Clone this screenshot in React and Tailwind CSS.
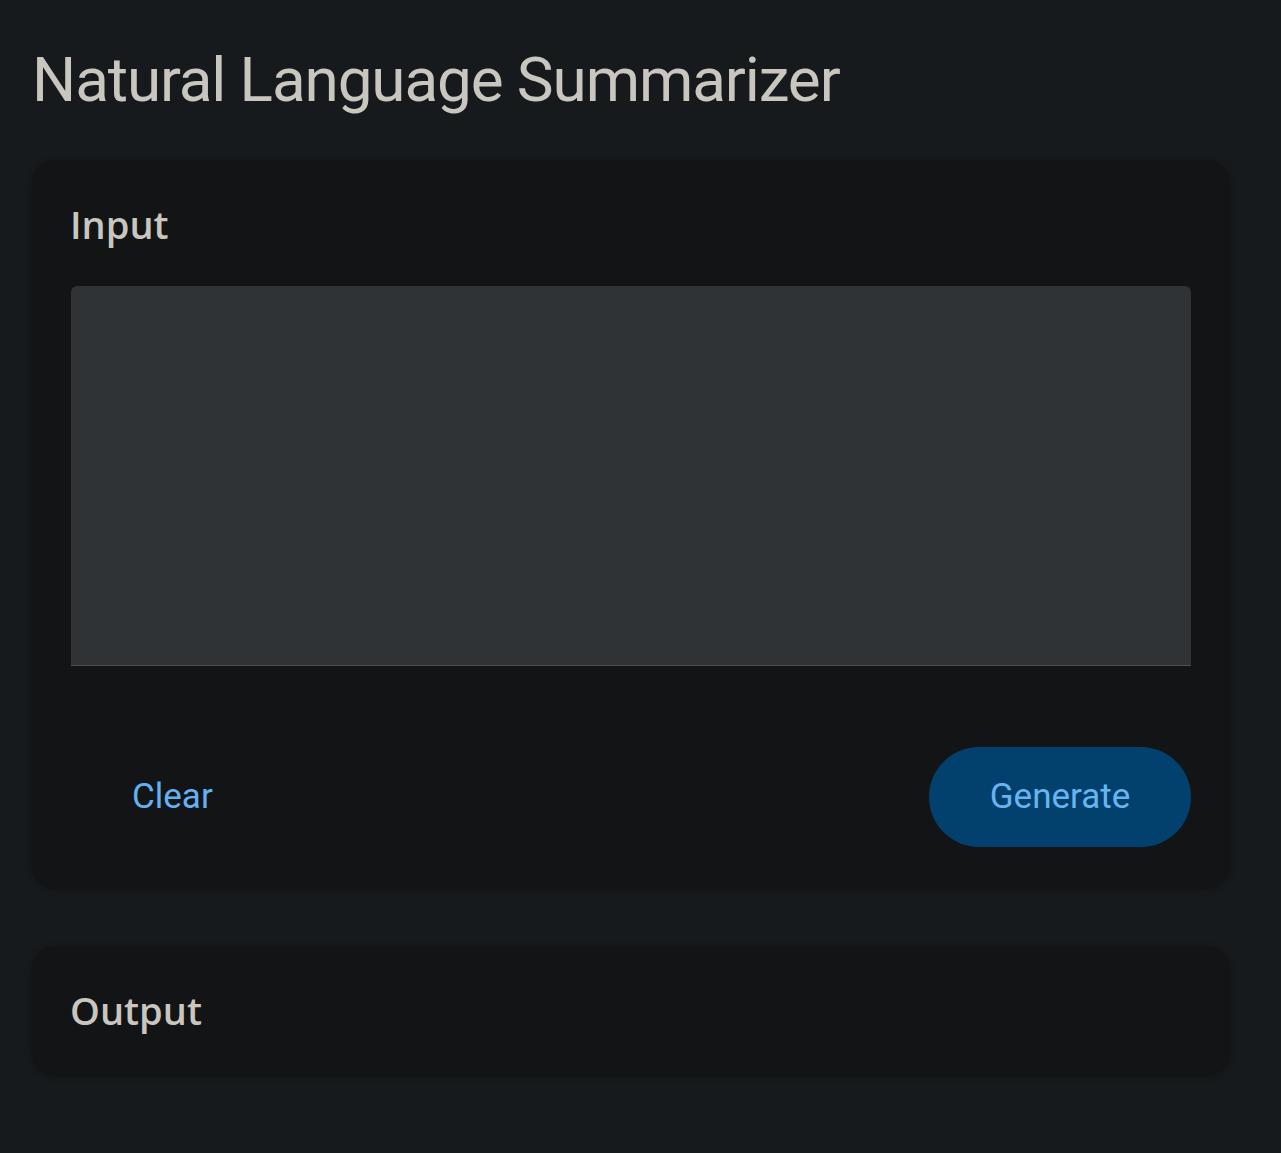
export default function App() {
  return (
    <div className="min-h-[1153px] bg-[#171a1c] pl-8 pt-[38px] pb-16">
      <h1 className="font-['Roboto',sans-serif] text-[62px] leading-[84px] text-[#c9c5bf] tracking-[-1.1px]">
        Natural Language Summarizer
      </h1>

      <div className="mt-[38px] flex w-[1198px] flex-col gap-[59px]">
        <section className="rounded-[24px] bg-[#121416] px-10 pt-[38px] pb-[40px] shadow-[0_2px_6px_rgba(0,0,0,0.35)]">
          <h2 className="font-['Open_Sans',sans-serif] font-semibold text-[38px] leading-[52px] text-[#c9c5bf] -ml-[2px]">
            Input
          </h2>
          <div className="mt-[36px] -ml-px -mr-px h-[380px] rounded-t-[6px] bg-[#2f3336] border-b border-[#4a4e51]" />
          <div className="mt-[81px] flex items-center justify-between">
            <button className="ml-[60px] font-['Roboto',sans-serif] text-[35px] leading-[44px] text-[#62b2f3]">
              Clear
            </button>
            <button className="-mr-px h-[100px] w-[262px] rounded-full bg-[#02416d] font-['Roboto',sans-serif] text-[35px] leading-[44px] text-[#68b4f0]">
              Generate
            </button>
          </div>
        </section>

        <section className="rounded-[24px] bg-[#121416] px-10 pt-[38px] pb-[38px] shadow-[0_2px_6px_rgba(0,0,0,0.35)]">
          <h2 className="font-['Open_Sans',sans-serif] font-semibold text-[38px] leading-[52px] text-[#c9c5bf] -ml-[2px]">
            Output
          </h2>
        </section>
      </div>
    </div>
  );
}
